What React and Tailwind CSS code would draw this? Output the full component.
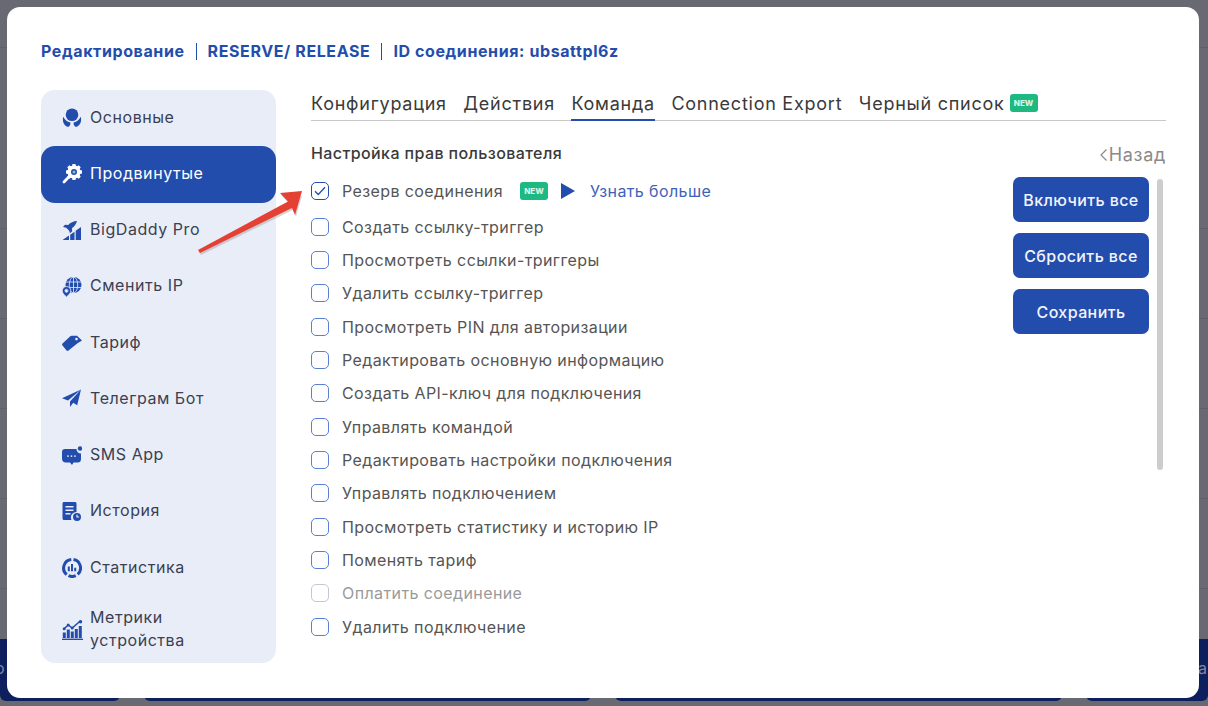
import React from 'react';

const ICON = '#234dad';
const NAV_BG = '#e9edf8';

function IconMain({ c }) {
  return (
    <svg width="20" height="20" viewBox="0 0 20 20" fill={c}>
      <circle cx="10" cy="6.8" r="6.3" />
      <path d="M1.300 8.800c1.300 3 3.800 5 7 5.600.4 1.500-.2 3.300-1.700 4.400C2.800 19 -.3 13.500 1.300 8.800z" />
      <path d="M18.700 8.800c1.600 4.700-1.500 10.200-5.300 10-1.500-1.100-2.100-2.900-1.700-4.400 3.200-.6 5.700-2.600 7-5.600z" />
    </svg>
  );
}

function IconAdvanced({ c }) {
  return (
    <svg width="20" height="20" viewBox="0 0 20 20" fill={c}>
      <g transform="translate(-1.500 0)">
        <path fillRule="evenodd" d="M12 0h3l.4 1.800 1.200.5 1.600-1 2 2-1 1.600.5 1.200 1.800.4v3l-1.800.4-.5 1.200 1 1.600-2 2-1.600-1-1.200.5L15 16h-3l-.4-1.800-1.200-.5-1.600 1-2-2 1-1.600-.5-1.200L5.500 9.500v-3l1.800-.4.5-1.200-1-1.600 2-2 1.600 1 1.200-.5zM13.500 5a3 3 0 100 6 3 3 0 000-6z" />
        <circle cx="13.500" cy="8" r="1.500" opacity="0.55" />
      </g>
      <path d="M6 11.800l2 2-5 5.200c-.6.600-1.500.600-2 0s-.6-1.400 0-2z" />
    </svg>
  );
}

function IconBigDaddy({ c }) {
  return (
    <svg width="20" height="20" viewBox="0 0 20 20" fill={c}>
      <path d="M15 0c-3.500.2-6.500 1.500-8.800 4L3 3.800 1 6l3.200.8 3 2.900.7 2.600 2.300-2-.3-3.100C12.500 5.300 14.300 3 15 0z" />
      <path d="M.5 19L7 14.500V19zM8.200 13.700l4.300-3V19H8.200zM13.700 9.800L19 6v13h-5.300z" />
    </svg>
  );
}

function IconIp({ c }) {
  return (
    <svg width="20" height="20" viewBox="0 0 20 20" fill={c}>
      <circle cx="11.500" cy="8" r="8" />
      <g fill="none" stroke={NAV_BG} strokeWidth="0.8">
        <path d="M3 5h17M3 10.500h17" />
        <path d="M11.500 0v16" />
        <ellipse cx="11.500" cy="8" rx="4.200" ry="8" />
      </g>
      <path fillRule="evenodd" stroke={NAV_BG} strokeWidth="0.8" d="M4.500 9.500a4.300 4.300 0 014.300 4.300c0 2.200-2.300 4.600-4.300 6.200-2-1.600-4.300-4-4.300-6.200a4.300 4.300 0 014.300-4.300zm0 2.800a1.500 1.500 0 100 3 1.500 1.500 0 000-3z" />
    </svg>
  );
}

function IconTag({ c }) {
  return (
    <svg width="20" height="20" viewBox="0 0 20 20" fill={c}>
      <path fillRule="evenodd" d="M.5 10.500L8 3.400c.5-.5 1-.7 1.700-.7H15l5 4.800-4.500 2.700-9 7.300c-.6.500-1.300.500-1.900 0L.5 12.500c-.6-.6-.6-1.400 0-2zM14.500 4.800a1.300 1.300 0 100 2.600 1.300 1.300 0 000-2.600z" />
    </svg>
  );
}

function IconPlane({ c }) {
  return (
    <svg width="20" height="20" viewBox="0 0 20 20" fill={c}>
      <path d="M19 .5L0 9.200l6 2.300L19 .5zM19 .5L8 12.500v5.500l3.200-4.200 4 2.500z" />
    </svg>
  );
}

function IconChat({ c }) {
  return (
    <svg width="20" height="20" viewBox="0 0 20 20" fill={c}>
      <path fillRule="evenodd" d="M3 3h11.500a4.500 4.500 0 004.500 4.500V13a3.500 3.500 0 01-3.500 3.500h-4L10 19l-2-2.500H4A4 4 0 010 12.500V6a3 3 0 013-3zM6 9.200a.9.900 0 100 1.800.9.900 0 000-1.800zm3.500 0a.9.900 0 100 1.800.9.900 0 000-1.800zm3.500 0a.9.900 0 100 1.800.9.900 0 000-1.800z" />
      <circle cx="18" cy="2.500" r="2.200" />
    </svg>
  );
}

function IconHistory({ c }) {
  return (
    <svg width="20" height="20" viewBox="0 0 20 20" fill={c}>
      <path fillRule="evenodd" d="M2 0h11c.8 0 1.500.7 1.500 1.500V10a5.500 5.500 0 00-5 8H2c-.8 0-1.500-.7-1.500-1.500v-15C.5.700 1.200 0 2 0zm1.500 4v1.500h8V4zm0 3.500V9h8V7.500zm0 3.500v1.500h5V11z" />
      <path fillRule="evenodd" d="M15 11a4 4 0 110 8 4 4 0 010-8zm-.6 1.800v2.800h2.800v-1.200h-1.600v-1.600z" />
    </svg>
  );
}

function IconStats({ c }) {
  return (
    <svg width="20" height="20" viewBox="0 0 20 20" fill={c}>
      <path fill="none" stroke={c} strokeWidth="3" d="M9.300 1.600A8.500 8.500 0 004.700 16.600M11.500 1.600A8.500 8.500 0 0115.700 16.300M6.500 17.700a8.500 8.500 0 007.300 0" />
      <path d="M5.800 8.500h2v4.800h-2zM9 6h2v7.300H9zM12.200 9.800h2v3.500h-2z" />
    </svg>
  );
}

function IconMetrics({ c }) {
  return (
    <svg width="22" height="20" viewBox="0 0 22 20" fill={c}>
      <path d="M.8 12.500h3V18h-3zM4.800 9.500h3V18h-3zM8.800 11.500h3V18h-3zM12.800 9h3v9h-3zM16.800 6h3v12h-3z" />
      <path d="M0 18.600h21V20H0z" />
      <path d="M2.200 8.800L6.200 5l4 3 7.500-6.500" fill="none" stroke={c} strokeWidth="1.500" />
      <circle cx="2.200" cy="8.800" r="1.500" />
      <circle cx="6.200" cy="5" r="1.500" />
      <circle cx="10.200" cy="8" r="1.500" />
      <circle cx="18.500" cy="1.800" r="1.800" />
    </svg>
  );
}

const NAV = [
  { label: 'Основные', icon: IconMain },
  { label: 'Продвинутые', icon: IconAdvanced, active: true },
  { label: 'BigDaddy Pro', icon: IconBigDaddy },
  { label: 'Сменить IP', icon: IconIp },
  { label: 'Тариф', icon: IconTag },
  { label: 'Телеграм Бот', icon: IconPlane },
  { label: 'SMS App', icon: IconChat },
  { label: 'История', icon: IconHistory },
  { label: 'Статистика', icon: IconStats },
  { label: 'Метрики устройства', icon: IconMetrics },
];

const TABS = [
  { label: 'Конфигурация' },
  { label: 'Действия' },
  { label: 'Команда', active: true },
  { label: 'Connection Export' },
  { label: 'Черный список', isNew: true },
];

const PERMS = [
  'Создать ссылку-триггер',
  'Просмотреть ссылки-триггеры',
  'Удалить ссылку-триггер',
  'Просмотреть PIN для авторизации',
  'Редактировать основную информацию',
  'Создать API-ключ для подключения',
  'Управлять командой',
  'Редактировать настройки подключения',
  'Управлять подключением',
  'Просмотреть статистику и историю IP',
  'Поменять тариф',
  'Оплатить соединение',
  'Удалить подключение',
];

function NewBadge() {
  return (
    <span className="flex h-[18px] w-[28px] shrink-0 items-center justify-center rounded-[3px] bg-[#1eb980] text-[8px] font-extrabold tracking-normal text-[#d9f5ea]">
      NEW
    </span>
  );
}

function CheckBox({ checked, disabled }) {
  const border = disabled ? 'border-[#c3c8d4]' : checked ? 'border-[#234dad]' : 'border-[#5b7fd0]';
  return (
    <span className={`flex h-[18px] w-[18px] shrink-0 items-center justify-center rounded-[5px] border ${border}`}>
      {checked && (
        <svg width="12" height="10" viewBox="0 0 12 10" fill="none" stroke="#234dad" strokeWidth="1.300">
          <path d="M1 5.200L4.300 8.500 11 1.200" />
        </svg>
      )}
    </span>
  );
}

export default function App() {
  return (
    <div className="relative h-[706px] w-[1208px] overflow-hidden bg-[#696973] p-[7px] font-['Inter',sans-serif]">
      {/* dimmed page behind the dialog */}
      <div className="absolute inset-x-0 top-[47px] h-px bg-[#5f5f69]" />
      <div className="absolute inset-x-0 top-[228px] h-px bg-[#5f5f69]" />
      <div className="absolute inset-x-0 top-[318px] h-px bg-[#5f5f69]" />
      <div className="absolute inset-x-0 top-[408px] h-px bg-[#5f5f69]" />
      <div className="absolute inset-x-0 top-[498px] h-px bg-[#5f5f69]" />
      <div className="absolute inset-x-0 top-[588px] h-px bg-[#5f5f69]" />
      <div className="absolute inset-x-0 top-[639px] flex h-[62px] gap-[24px] text-[16px] leading-[58px] text-[#7f869f]">
        <div className="w-[120px] overflow-hidden rounded-b-md bg-[#0e1f5e]">
          <span className="-ml-[5px]">о</span>
        </div>
        <div className="w-[447px] rounded-b-md bg-[#0e1f5e]" />
        <div className="w-[447px] rounded-b-md bg-[#0e1f5e]" />
        <div className="flex-1 rounded-b-md bg-[#0e1f5e] pr-[1px] text-right">а</div>
      </div>

      <div className="relative flex h-[691px] w-[1192px] flex-col rounded-[13px] bg-white pl-[34px] pr-[33px] pt-[34px]">
        <div className="flex h-[20px] items-center text-[16px] font-bold tracking-[0.6px] text-[#234dad]">
          <span>Редактирование</span>
          <span className="mx-[11px] h-[17px] w-px bg-[#234dad]" />
          <span>RESERVE/ RELEASE</span>
          <span className="mx-[11px] h-[17px] w-px bg-[#234dad]" />
          <span>ID соединения: ubsattpl6z</span>
        </div>

        <div className="mt-[29px] flex gap-[35px]">
          <div className="flex h-[573px] w-[235px] shrink-0 flex-col rounded-[14px] bg-[#e9edf8]">
            {NAV.map((item) => {
              const Icon = item.icon;
              return (
                <div
                  key={item.label}
                  className={`flex min-h-[56.25px] items-center gap-[6px] rounded-[14px] pl-[21px] pr-[60px] text-[16px] leading-[23px] tracking-[0.55px] last:flex-1 ${
                    item.active ? 'bg-[#234dad] text-white' : 'text-[#3a3f52]'
                  }`}
                >
                  <span className="flex w-[22px] shrink-0 items-center">
                    <Icon c={item.active ? '#ffffff' : ICON} />
                  </span>
                  <span className="-mt-[2px]">{item.label}</span>
                </div>
              );
            })}
          </div>

          <div className="min-w-0 flex-1">
            <div className="flex h-[31px] gap-[16.5px] border-b border-[#c8c8c8] text-[18px] leading-[28px] tracking-[0.75px] text-[#3a3a3a]">
              {TABS.map((tab) => (
                <div
                  key={tab.label}
                  className={`flex h-[31px] items-start gap-[5px] ${tab.active ? 'border-b-2 border-[#234dad]' : ''}`}
                >
                  <span>{tab.label}</span>
                  {tab.isNew && (
                    <span className="mt-[4px]">
                      <NewBadge />
                    </span>
                  )}
                </div>
              ))}
            </div>

            <div className="mt-[17px] flex items-center justify-between">
              <span className="text-[16px] font-medium tracking-[0.4px] text-[#3a3a3a]">Настройка прав пользователя</span>
              <span className="flex items-center gap-[1px] pt-[3px] text-[18px] tracking-[0.7px] text-[#8a8a8a]">
                <svg width="9" height="14" viewBox="0 0 9 14" fill="none" stroke="#8a8a8a" strokeWidth="1.200">
                  <path d="M7.500 1.500L2 7l5.500 5.500" />
                </svg>
                Назад
              </span>
            </div>

            <div className="flex justify-between pr-[3px]">
              <div className="mt-[6px] flex flex-col text-[16px] tracking-[0.4px] text-[#555555]">
                <div className="flex h-[36px] items-center gap-[13px] pb-[3px]">
                  <CheckBox checked />
                  <span>Резерв соединения</span>
                  <span className="ml-[4px]">
                    <NewBadge />
                  </span>
                  <svg width="14" height="16" viewBox="0 0 14 16" fill="#234dad">
                    <path d="M0 0l14 8-14 8z" />
                  </svg>
                  <span className="ml-[2px] text-[#3f62b8]">Узнать больше</span>
                </div>
                {PERMS.map((perm) => {
                  const disabled = perm === 'Оплатить соединение';
                  return (
                    <div
                      key={perm}
                      className={`flex h-[33.35px] items-center gap-[13px] ${disabled ? 'text-[#9a9a9a]' : ''}`}
                    >
                      <CheckBox disabled={disabled} />
                      <span>{perm}</span>
                    </div>
                  );
                })}
              </div>

              <div className="flex gap-[8px] pt-[9px]">
                <div className="flex flex-col gap-[11px]">
                  {['Включить все', 'Сбросить все', 'Сохранить'].map((label) => (
                    <button
                      key={label}
                      className="h-[45px] w-[136px] rounded-[7px] bg-[#234dad] text-[16px] font-medium tracking-[0.4px] text-[#f2f4fb]"
                    >
                      {label}
                    </button>
                  ))}
                </div>
                <div className="mt-[2px] h-[291px] w-[6px] rounded-full bg-[#cdcdcd]" />
              </div>
            </div>
          </div>
        </div>
      </div>

      {/* red annotation arrow */}
      <svg className="absolute left-[190px] top-[175px]" width="125" height="90" viewBox="0 0 125 90">
        <path d="M8 75L98 26.500 90 18l21 1-6 21-3-7L10 78z" fill="#8a8a8a" opacity="0.35" transform="translate(1 2)" />
        <path d="M8 75L98 26.500 90 18l22-2-7 24-3-7L10 78z" fill="#e54034" />
      </svg>
    </div>
  );
}
